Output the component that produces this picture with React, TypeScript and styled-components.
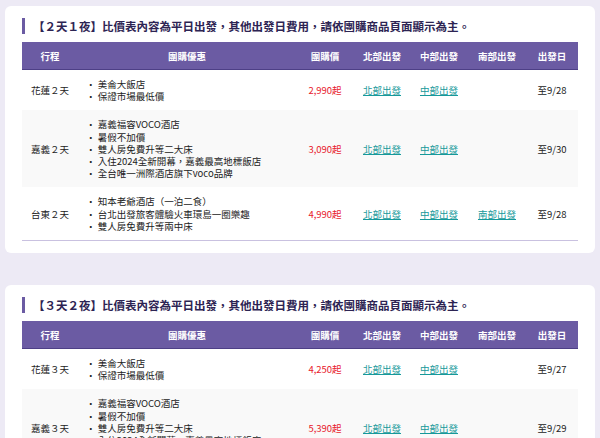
import styled, { createGlobalStyle } from 'styled-components';

const Global = createGlobalStyle`
  body { margin: 0; background: #edeaf5; font-family: "Noto Sans CJK TC", "Noto Sans", sans-serif; color: #222; }
`;

type Row = { name: string; perks: string[]; price: string; n?: boolean; m?: boolean; s?: boolean; date: string };

const tables: { title: string; rows: Row[] }[] = [
  {
    title: '【２天１夜】比價表內容為平日出發，其他出發日費用，請依團購商品頁面顯示為主。',
    rows: [
      { name: '花蓮２天', perks: ['美侖大飯店', '保證市場最低價'], price: '2,990起', n: true, m: true, date: '至9/28' },
      { name: '嘉義２天', perks: ['嘉義福容VOCO酒店', '暑假不加價', '雙人房免費升等二大床', '入住2024全新開幕，嘉義最高地標飯店', '全台唯一洲際酒店旗下voco品牌'], price: '3,090起', n: true, m: true, date: '至9/30' },
      { name: '台東２天', perks: ['知本老爺酒店（一泊二食）', '台北出發旅客體驗火車環島一圈樂趣', '雙人房免費升等兩中床'], price: '4,990起', n: true, m: true, s: true, date: '至9/28' },
    ],
  },
  {
    title: '【３天２夜】比價表內容為平日出發，其他出發日費用，請依團購商品頁面顯示為主。',
    rows: [
      { name: '花蓮３天', perks: ['美侖大飯店', '保證市場最低價'], price: '4,250起', n: true, m: true, date: '至9/27' },
      { name: '嘉義３天', perks: ['嘉義福容VOCO酒店', '暑假不加價', '雙人房免費升等二大床', '入住2024全新開幕，嘉義最高地標飯店', '全台唯一洲際酒店旗下voco品牌'], price: '5,390起', n: true, m: true, date: '至9/29' },
    ],
  },
];

const Page = styled.div`
  padding: 6px 5px;
  display: flex;
  flex-direction: column;
  gap: 32px;
`;

const Card = styled.div`
  background: #fff;
  border-radius: 6px;
  padding: 12px 17px 12px 17px;
`;

const Title = styled.h2`
  margin: 0 0 8px;
  font-size: 11.5px;
  font-weight: 700;
  color: #2d2453;
  border-left: 3px solid #6b5ba3;
  padding-left: 8px;
  line-height: 16px;
`;

const Table = styled.table`
  width: 100%;
  border-collapse: collapse;
  font-size: 9.5px;
  border-bottom: 1px solid #c9c1e0;
`;

const Th = styled.th<{ $w?: number }>`
  background: #6b5ba3;
  color: #fff;
  font-weight: 700;
  height: 27px;
  padding: 0;
  border-bottom: 1px solid #4d3f86;
  width: ${p => (p.$w ? `${p.$w}px` : 'auto')};
`;

const Tr = styled.tr`
  &:nth-child(even) { background: #f9f9f9; }
`;

const Td = styled.td`
  text-align: center;
  padding: 8px 0;
  line-height: 12.2px;
`;

const Perks = styled.td`
  text-align: left;
  padding: 8px 0 8px 8px;
  line-height: 12.2px;
`;

const Price = styled(Td)`
  color: #e8192c;
`;

const Link = styled.a`
  color: #16999a;
  text-decoration: underline;
`;

export default function App() {
  return (
    <Page>
      <Global />
      {tables.map(t => (
        <Card key={t.title}>
          <Title>{t.title}</Title>
          <Table>
            <thead>
              <tr>
                <Th $w={56}>行程</Th>
                <Th>團購優惠</Th>
                <Th $w={58}>團購價</Th>
                <Th $w={56}>北部出發</Th>
                <Th $w={58}>中部出發</Th>
                <Th $w={58}>南部出發</Th>
                <Th $w={52}>出發日</Th>
              </tr>
            </thead>
            <tbody>
              {t.rows.map(r => (
                <Tr key={r.name}>
                  <Td>{r.name}</Td>
                  <Perks>
                    {r.perks.map(p => (
                      <div key={p}>· {p}</div>
                    ))}
                  </Perks>
                  <Price>{r.price}</Price>
                  <Td>{r.n && <Link>北部出發</Link>}</Td>
                  <Td>{r.m && <Link>中部出發</Link>}</Td>
                  <Td>{r.s && <Link>南部出發</Link>}</Td>
                  <Td>{r.date}</Td>
                </Tr>
              ))}
            </tbody>
          </Table>
        </Card>
      ))}
    </Page>
  );
}
